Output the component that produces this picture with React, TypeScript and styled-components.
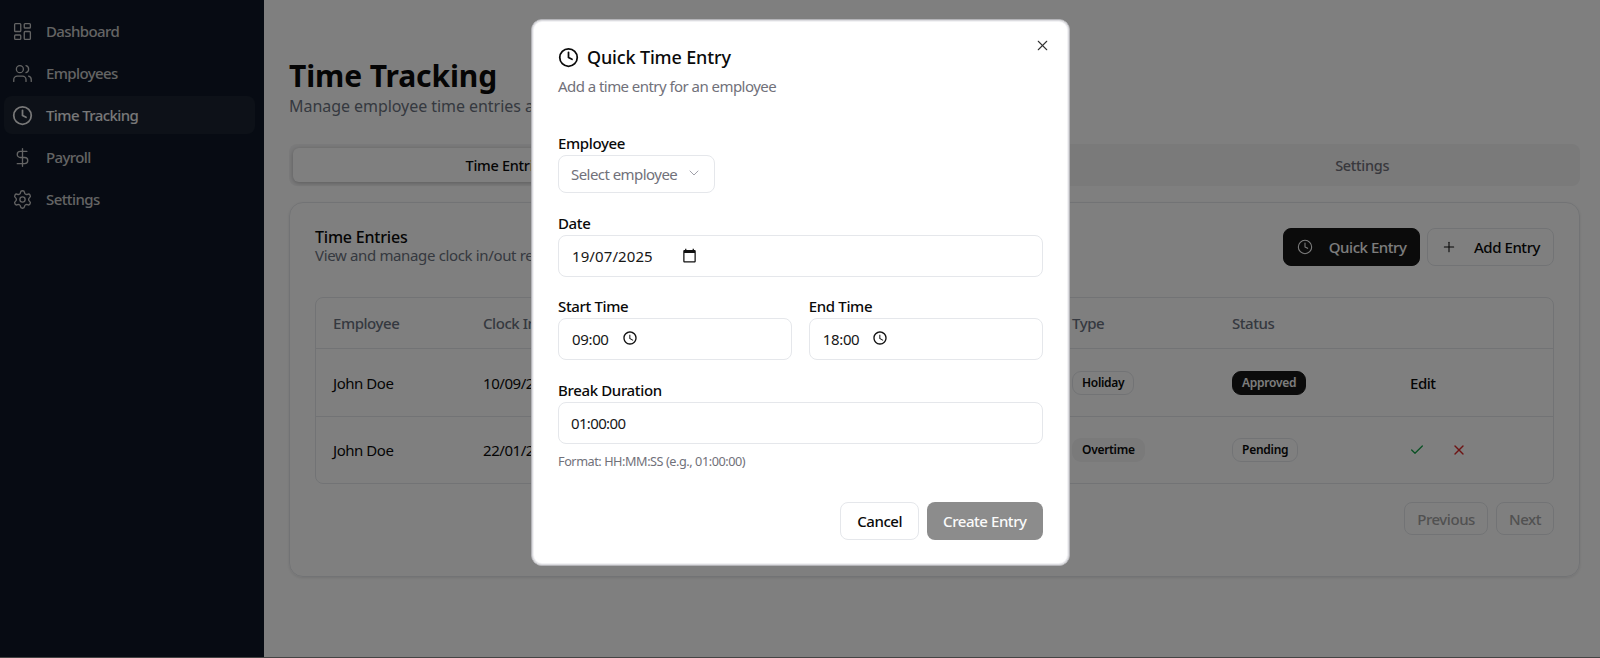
import React from "react";
import styled, { createGlobalStyle } from "styled-components";
import { Check, ChevronDown, Clock, DollarSign, LayoutDashboard, Plus, Settings, Users, X } from "lucide-react";

const GlobalStyle = createGlobalStyle`
  html { background: #444; }
  body { margin: 0; font-family: "Noto Sans", "Open Sans", sans-serif; color: #0a0a0a; letter-spacing: -0.45px; }
  * { box-sizing: border-box; }
`;

const navItems = [
  { label: "Dashboard", icon: LayoutDashboard },
  { label: "Employees", icon: Users },
  { label: "Time Tracking", icon: Clock, active: true },
  { label: "Payroll", icon: DollarSign },
  { label: "Settings", icon: Settings },
];

const CalendarGlyph = () => (
  <svg width="15" height="15" viewBox="0 0 24 24" fill="#111">
    <path d="M20 3h-1V1h-2v2H7V1H5v2H4c-1.1 0-2 .9-2 2v16c0 1.1.9 2 2 2h16c1.1 0 2-.9 2-2V5c0-1.1-.9-2-2-2zm0 18H4V8h16v13z" />
  </svg>
);

const ClockGlyph = () => (
  <GlyphWrap>
    <svg width="16" height="16" viewBox="0 0 24 24" fill="#111">
      <path d="M11.99 2C6.47 2 2 6.48 2 12s4.47 10 9.99 10C17.52 22 22 17.52 22 12S17.52 2 11.99 2zM12 20c-4.42 0-8-3.58-8-8s3.58-8 8-8 8 3.58 8 8-3.58 8-8 8zm.5-13H11v6l5.25 3.15.75-1.23-4.5-2.67z" />
    </svg>
  </GlyphWrap>
);

export default function App() {
  return (
    <Shell>
      <GlobalStyle />
      <Sidebar>
        {navItems.map((item) => (
          <NavItem key={item.label} $active={item.active}>
            <item.icon size={21} strokeWidth={item.active ? 2 : 1.5} />
            {item.label}
          </NavItem>
        ))}
      </Sidebar>
      <Main>
        <Title>Time Tracking</Title>
        <Subtitle>Manage employee time entries and approvals</Subtitle>
        <Tabs>
          <Tab $active>Time Entries</Tab>
          <Tab>Reports</Tab>
          <Tab>Settings</Tab>
        </Tabs>
        <Card>
          <CardHeader>
            <div>
              <CardTitle>Time Entries</CardTitle>
              <CardSub>View and manage clock in/out records</CardSub>
            </div>
            <HeaderActions>
              <Button $primary>
                <Clock size={16} strokeWidth={1.6} />
                Quick Entry
              </Button>
              <Button>
                <Plus size={16} strokeWidth={1.6} />
                Add Entry
              </Button>
            </HeaderActions>
          </CardHeader>
          <Table>
            <HeadRow>
              <span>Employee</span>
              <span>Clock In</span>
              <span>Type</span>
              <span>Status</span>
              <span />
            </HeadRow>
            <Row>
              <span>John Doe</span>
              <span>10/09/2025</span>
              <span><TypeBadge>Holiday</TypeBadge></span>
              <span><StatusBadge $approved>Approved</StatusBadge></span>
              <EditLink>Edit</EditLink>
            </Row>
            <Row $last>
              <span>John Doe</span>
              <span>22/01/2025</span>
              <span><TypeBadge $filled>Overtime</TypeBadge></span>
              <span><StatusBadge>Pending</StatusBadge></span>
              <RowActions>
                <Check size={16} color="#16a34a" />
                <X size={16} color="#dc2626" />
              </RowActions>
            </Row>
          </Table>
          <Pagination>
            <PageButton>Previous</PageButton>
            <PageButton>Next</PageButton>
          </Pagination>
        </Card>
      </Main>

      <Overlay>
        <Modal>
          <CloseIcon>
            <X size={17} strokeWidth={1.5} />
          </CloseIcon>
          <ModalTitle>
            <Clock size={21} strokeWidth={2} />
            Quick Time Entry
          </ModalTitle>
          <ModalSub>Add a time entry for an employee</ModalSub>

          <Form>
            <Field>
              <Label>Employee</Label>
              <SelectBox>
                Select employee
                <ChevronDown size={16} strokeWidth={1.5} />
              </SelectBox>
            </Field>
            <Field>
              <Label>Date</Label>
              <Input>
                <DateValue>19/07/2025</DateValue>
                <CalendarGlyph />
              </Input>
            </Field>
            <TimeRow>
              <Field>
                <Label>Start Time</Label>
                <Input>
                  <TimeValue>09:00</TimeValue>
                  <ClockGlyph />
                </Input>
              </Field>
              <Field>
                <Label>End Time</Label>
                <Input>
                  <TimeValue>18:00</TimeValue>
                  <ClockGlyph />
                </Input>
              </Field>
            </TimeRow>
            <Field>
              <Label>Break Duration</Label>
              <Input $tight>01:00:00</Input>
              <Help>Format: HH:MM:SS (e.g., 01:00:00)</Help>
            </Field>
          </Form>

          <ModalFooter>
            <CancelButton>Cancel</CancelButton>
            <CreateButton>Create Entry</CreateButton>
          </ModalFooter>
        </Modal>
      </Overlay>
    </Shell>
  );
}

const Shell = styled.div`
  position: relative;
  display: flex;
  height: 657px;
  overflow: hidden;
  background: #fff;
`;

const Sidebar = styled.aside`
  width: 264px;
  flex-shrink: 0;
  background: #0e1726;
  padding: 12px 9px 13px 4px;
  display: flex;
  flex-direction: column;
  gap: 4px;
`;

const NavItem = styled.div<{ $active?: boolean }>`
  height: 38px;
  display: flex;
  align-items: center;
  gap: 13px;
  padding: 0 8px;
  border-radius: 8px;
  font-size: 15px;
  font-weight: 500;
  letter-spacing: -0.6px;
  color: ${(p) => (p.$active ? "#f0f0f0" : "#c8c8c8")};
  background: ${(p) => (p.$active ? "#1a2230" : "transparent")};
`;

const Main = styled.main`
  flex: 1;
  min-width: 0;
  padding: 58px 20px 0 25px;
`;

const Title = styled.h1`
  margin: 0;
  font-size: 30px;
  line-height: 36px;
  font-weight: 700;
  letter-spacing: -0.1px;
`;

const Subtitle = styled.p`
  margin: 0;
  font-size: 16px;
  line-height: 24px;
  color: #6b7280;
  letter-spacing: -0.05px;
`;

const Tabs = styled.div`
  margin-top: 26px;
  height: 42px;
  padding: 4px;
  display: grid;
  grid-template-columns: repeat(3, 1fr);
  border-radius: 8px;
  background: #f4f4f5;
`;

const Tab = styled.div<{ $active?: boolean }>`
  display: flex;
  align-items: center;
  justify-content: center;
  border-radius: 6px;
  font-size: 14.5px;
  font-weight: 500;
  letter-spacing: -0.3px;
  color: ${(p) => (p.$active ? "#0a0a0a" : "#71717a")};
  background: ${(p) => (p.$active ? "#fff" : "transparent")};
  box-shadow: ${(p) => (p.$active ? "0 1px 4px rgba(0,0,0,.25)" : "none")};
`;

const Card = styled.section`
  margin-top: 16px;
  height: 375px;
  padding: 25px 25px 24px;
  border: 1px solid #e5e7eb;
  border-radius: 14px;
  box-shadow: 0 1px 3px rgba(0, 0, 0, 0.1);
`;

const CardHeader = styled.div`
  display: flex;
  justify-content: space-between;
  align-items: flex-start;
  height: 69px;
`;

const CardTitle = styled.h2`
  margin: -1px 0 0;
  font-size: 16px;
  line-height: 20px;
  font-weight: 500;
  letter-spacing: -0.2px;
`;

const CardSub = styled.p`
  margin: 0;
  font-size: 15px;
  line-height: 17px;
  color: #6b7280;
  letter-spacing: -0.35px;
`;

const HeaderActions = styled.div`
  display: flex;
  gap: 7px;
`;

const Button = styled.div<{ $primary?: boolean }>`
  height: 38px;
  display: flex;
  align-items: center;
  gap: ${(p) => (p.$primary ? "16px" : "17px")};
  padding: 0 ${(p) => (p.$primary ? "12.5px" : "13px")};
  border-radius: 8px;
  font-size: 15px;
  font-weight: 500;
  background: ${(p) => (p.$primary ? "#171717" : "#fff")};
  color: ${(p) => (p.$primary ? "#fafafa" : "#0a0a0a")};
  border: 1px solid ${(p) => (p.$primary ? "#171717" : "#e5e7eb")};
`;

const Table = styled.div`
  border: 1px solid #e5e7eb;
  border-radius: 8px;
  overflow: hidden;
`;

const columns = "150px 589px 160px 178px 1fr";

const HeadRow = styled.div`
  display: grid;
  grid-template-columns: ${columns};
  align-items: center;
  height: 51px;
  padding-left: 17px;
  border-bottom: 1px solid #e5e7eb;
  font-size: 15px;
  font-weight: 500;
  color: #6b7280;
`;

const Row = styled.div<{ $last?: boolean }>`
  display: grid;
  grid-template-columns: ${columns};
  align-items: center;
  height: ${(p) => (p.$last ? "66px" : "68px")};
  padding-left: 17px;
  border-bottom: ${(p) => (p.$last ? "none" : "1px solid #e5e7eb")};
  font-size: 15px;
`;

const TypeBadge = styled.span<{ $filled?: boolean }>`
  display: inline-block;
  padding: 2px 9px;
  border-radius: 9px;
  font-size: 12px;
  line-height: 18px;
  font-weight: 600;
  letter-spacing: -0.3px;
  border: 1px solid ${(p) => (p.$filled ? "transparent" : "#e5e7eb")};
  background: ${(p) => (p.$filled ? "#f4f4f5" : "transparent")};
`;

const StatusBadge = styled.span<{ $approved?: boolean }>`
  display: inline-block;
  padding: 2px 9px;
  border-radius: 9px;
  font-size: 12px;
  line-height: 18px;
  font-weight: 600;
  letter-spacing: -0.25px;
  border: 1px solid ${(p) => (p.$approved ? "#171717" : "#e5e7eb")};
  background: ${(p) => (p.$approved ? "#171717" : "transparent")};
  color: ${(p) => (p.$approved ? "#fafafa" : "#0a0a0a")};
`;

const EditLink = styled.span`
  font-size: 15px;
  font-weight: 500;
`;

const RowActions = styled.div`
  display: flex;
  gap: 26px;
  margin-left: -1px;
`;

const Pagination = styled.div`
  display: flex;
  justify-content: flex-end;
  gap: 8px;
  margin-top: 18px;
`;

const PageButton = styled.div`
  height: 33px;
  display: flex;
  align-items: center;
  padding: 0 12px;
  border: 1px solid #e5e7eb;
  border-radius: 8px;
  font-size: 15px;
  font-weight: 500;
  color: #a3a3a3;
`;

const Overlay = styled.div`
  position: absolute;
  inset: 0;
  display: flex;
  justify-content: center;
  align-items: flex-start;
  padding-top: 19px;
  background: rgba(0, 0, 0, 0.5);
`;

const Modal = styled.div`
  position: relative;
  width: 539px;
  height: 547px;
  padding: 25px 26px 24px 26.5px;
  background: #fff;
  border: 1px solid #b4b4b8;
  border-radius: 11px;
  box-shadow: inset 0 0 0 1px #dcdce0, inset 0 0 0 2px #f2f2f4;
`;

const CloseIcon = styled.div`
  position: absolute;
  top: 17px;
  right: 18px;
  display: flex;
  color: #333;
`;

const ModalTitle = styled.h2`
  margin: 0;
  display: flex;
  align-items: center;
  gap: 8px;
  font-size: 18px;
  line-height: 24px;
  font-weight: 500;
  letter-spacing: -0.15px;
`;

const ModalSub = styled.p`
  margin: 7px 0 0;
  font-size: 15px;
  line-height: 20px;
  letter-spacing: -0.55px;
  color: #71717a;
`;

const Form = styled.div`
  margin-top: 37px;
  display: flex;
  flex-direction: column;
  gap: 19.5px;
`;

const Field = styled.div`
  display: flex;
  flex-direction: column;
  align-items: stretch;
  min-width: 0;
`;

const Label = styled.label`
  font-size: 15px;
  line-height: 20px;
  margin-bottom: 2px;
  font-weight: 500;
  letter-spacing: -0.35px;
`;

const SelectBox = styled.div`
  align-self: flex-start;
  height: 38px;
  display: flex;
  align-items: center;
  gap: 9px;
  padding: 0 12px;
  border: 1px solid #e5e7eb;
  border-radius: 8px;
  font-size: 15px;
  letter-spacing: -0.55px;
  color: #71717a;

  svg {
    margin-top: -3px;
    color: #a1a1aa;
  }
`;

const Input = styled.div<{ $tight?: boolean }>`
  height: 42px;
  display: flex;
  align-items: center;
  padding: 0 12px;
  border: 1px solid #e5e7eb;
  border-radius: 8px;
  font-size: 15px;
  letter-spacing: ${(p) => (p.$tight ? "-0.65px" : "inherit")};
  color: #171717;
`;

const DateValue = styled.span`
  margin-left: 1px;
  margin-right: 30px;
  width: 80px;
  letter-spacing: 0.1px;
`;

const TimeValue = styled.span`
  margin-left: 1px;
  margin-right: 13px;
  letter-spacing: -0.35px;
`;

const GlyphWrap = styled.span`
  display: flex;
  margin-top: -3px;
`;

const TimeRow = styled.div`
  display: grid;
  grid-template-columns: 1fr 1fr;
  gap: 17px;
`;

const Help = styled.p`
  margin: 9px 0 0;
  font-size: 12.7px;
  line-height: 16px;
  color: #71717a;
`;

const ModalFooter = styled.div`
  margin-top: 33px;
  display: flex;
  justify-content: flex-end;
  gap: 8px;
`;

const CancelButton = styled.div`
  height: 38px;
  display: flex;
  align-items: center;
  padding: 0 16px;
  border: 1px solid #e5e7eb;
  border-radius: 8px;
  font-size: 15px;
  font-weight: 500;
`;

const CreateButton = styled.div`
  height: 38px;
  display: flex;
  align-items: center;
  padding: 0 16px;
  border-radius: 8px;
  font-size: 15px;
  font-weight: 500;
  color: #fafafa;
  background: #8c8c8c;
`;
